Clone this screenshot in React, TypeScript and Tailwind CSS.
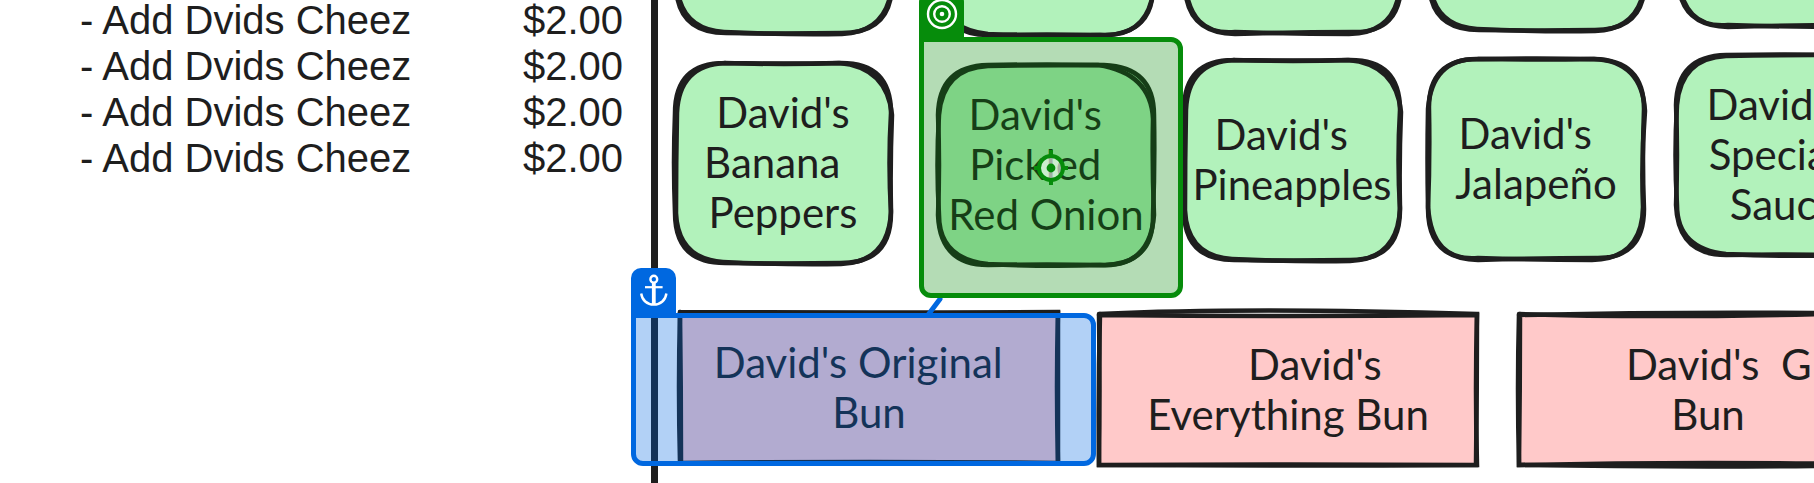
type Variant = "a" | "b" | "c";

const roundedStrokes: Record<Variant, string[]> = {
  a: [
    "M50 0 Q110 2 166 0 Q216 0 216 50 Q213 100 216 150 Q216 200 166 200 Q110 201 50 200 Q0 200 0 150 Q-2 100 0 50 Q0 0 50 0",
    "M50 0 Q110 1 164 0 Q212 4 217 52 Q215 100 216 148 Q214 199 166 201 Q110 202 48 199 Q3 196 1 150 Q1 100 2 50 Q4 2 50 0",
  ],
  b: [
    "M50 0 Q110 -1 166 0 Q216 2 216 50 Q217 100 215 150 Q216 199 166 200 Q110 199 50 200 Q2 200 0 150 Q2 100 0 50 Q1 1 50 0",
    "M50 1 Q110 0 160 0 Q213 8 215 54 Q214 100 216 150 Q212 203 162 200 Q110 202 50 199 Q1 194 1 150 Q-2 100 1 50 Q5 3 50 1",
  ],
  c: [
    "M50 0 Q110 1 166 0 Q216 1 216 50 Q214 100 216 150 Q216 200 168 199 Q110 199 50 201 Q0 200 0 150 Q2 100 1 50 Q0 0 50 0",
    "M50 0 Q110 -1 166 0 Q214 2 217 52 Q213 100 215 148 Q214 200 164 201 Q110 201 50 199 Q4 203 0 148 Q-1 100 0 50 Q4 -1 50 0",
  ],
};

const rectStrokes: Record<Variant, string[]> = {
  a: [
    "M0 0 Q190 1 378 0 Q376 75 378 151 Q190 149 0 151 Q-2 75 0 0",
    "M0 1 Q190 2 378 1 Q378 75 378 151 Q190 152 1 151 Q1 75 0 0",
  ],
  b: [
    "M0 0 Q150 -7 378 0 Q376 75 378 151 Q190 152 0 151 Q1 75 0 0",
    "M0 1 Q190 3 378 1 Q378 75 377 151 Q190 150 0 151 Q-1 75 1 0",
  ],
  c: [
    "M0 0 Q150 5 378 -2 Q376 75 378 151 Q190 147 0 151 Q-2 75 0 0",
    "M0 1 Q190 -3 378 0 Q378 75 377 151 Q190 154 0 151 Q1 75 1 0",
  ],
};

const ROUNDED_FILL =
  "M50 0 H166 Q216 0 216 50 V150 Q216 200 166 200 H50 Q0 200 0 150 V50 Q0 0 50 0";

function Sketch({ fill, outline, strokes, viewBox }: { fill: string; outline: string; strokes: string[]; viewBox: string }) {
  return (
    <svg viewBox={viewBox} className="absolute inset-0 size-full overflow-visible" aria-hidden="true">
      <path d={outline} fill={fill} />
      {strokes.map((d) => (
        <path key={d} d={d} fill="none" stroke="#1e1e1e" strokeWidth="4.5" strokeLinecap="round" />
      ))}
    </svg>
  );
}

function Label({ lines }: { lines: string[] }) {
  return (
    <p className="relative text-center font-['Excalifont','Virgil','Lato',sans-serif] text-[42px] leading-[50px] whitespace-pre">
      {lines.join("\n")}
    </p>
  );
}

function Topping({ place, lines, variant }: { place: string; lines: string[]; variant: Variant }) {
  return (
    <div className={`absolute flex h-[200px] w-[216px] items-center justify-center pb-0.5 ${place}`}>
      <Sketch fill="#b2f2bb" outline={ROUNDED_FILL} strokes={roundedStrokes[variant]} viewBox="0 0 216 200" />
      {lines.length > 0 && <Label lines={lines} />}
    </div>
  );
}

function Bun({ place, lines, variant }: { place: string; lines: string[]; variant: Variant }) {
  return (
    <div className={`absolute flex h-[151px] w-[378px] items-center justify-center pb-0.5 ${place}`}>
      <Sketch fill="#ffc9c9" outline="M0 0 H378 V151 H0 Z" strokes={rectStrokes[variant]} viewBox="0 0 378 151" />
      <Label lines={lines} />
    </div>
  );
}

const gap = "\u00a0\u00a0";

const toppings: { place: string; lines: string[]; variant: Variant }[] = [
  { place: "left-[676px] top-[-167px]", lines: [], variant: "a" },
  { place: "left-[938px] top-[-165px]", lines: [], variant: "b" },
  { place: "left-[1185px] top-[-167px]", lines: [], variant: "c" },
  { place: "left-[1429px] top-[-170px]", lines: [], variant: "a" },
  { place: "left-[1678px] top-[-174px]", lines: [], variant: "c" },
  { place: "left-[675px] top-[63px]", lines: ["David's", "Banana" + gap, "Peppers"], variant: "a" },
  { place: "left-[938px] top-[65px]", lines: ["David's" + gap, "Pickled" + gap, "Red Onion"], variant: "b" },
  { place: "left-[1184px] top-[60px]", lines: ["David's" + gap, "Pineapples"], variant: "a" },
  { place: "left-[1428px] top-[59px]", lines: ["David's" + gap, "Jalapeño"], variant: "c" },
  { place: "left-[1676px] top-[55px]", lines: ["David's" + gap, "Special" + gap, "Sauce"], variant: "b" },
];

const buns: { place: string; lines: string[]; variant: Variant }[] = [
  { place: "left-[680px] top-[312px]", lines: ["David's Original" + gap, "Bun"], variant: "a" },
  { place: "left-[1099px] top-[314px]", lines: [gap + gap + "\u00a0David's", "Everything Bun"], variant: "b" },
  { place: "left-[1519px] top-[314px]", lines: [gap + "David's" + gap + "G", "Bun"], variant: "c" },
];

const orderLines = [1, 2, 3, 4].map((id) => ({ id, name: "- Add Dvids Cheez", price: "$2.00" }));

function TargetIcon() {
  return (
    <svg viewBox="0 0 32 32" className="size-8" fill="none" stroke="#fff" strokeWidth="2.4" aria-hidden="true">
      <circle cx="16" cy="16" r="14" />
      <circle cx="16" cy="16" r="7.8" />
      <circle cx="16" cy="16" r="2.3" fill="#fff" stroke="none" />
    </svg>
  );
}

function AnchorIcon() {
  return (
    <svg viewBox="0 0 32 32" className="size-8" fill="none" stroke="#fff" aria-hidden="true">
      <circle cx="15.8" cy="5.2" r="3.4" strokeWidth="2.4" />
      <path d="M15.8 8.5V30" strokeWidth="3.8" />
      <path d="M7 13.2H24.6" strokeWidth="2.2" />
      <path d="M3.2 19.5C4 26 9 30.6 15.8 30.6S27.6 26 28.4 19.5" strokeWidth="2.4" />
    </svg>
  );
}

function Crosshair() {
  return (
    <svg viewBox="-18 -18 36 36" className="absolute top-[150px] left-[1033px] size-9" stroke="#068c0b" strokeWidth="4" aria-hidden="true">
      <path d="M0 -18V-12M0 12V17M-17 0H-12M12 0H17" />
      <circle r="12" fill="#fff" fillOpacity="0.6" />
      <circle r="4.4" fill="#068c0b" stroke="none" />
    </svg>
  );
}

export default function App() {
  return (
    <main className="relative h-screen overflow-hidden bg-white text-[#1e1e1e]">
      <table className="-mt-[3px] ml-20 w-[543px] font-['Liberation_Sans',Arial,sans-serif] text-[40px] leading-[46px]">
        <tbody>
          {orderLines.map((line) => (
            <tr key={line.id}>
              <td className="p-0">{line.name}</td>
              <td className="p-0 text-right">{line.price}</td>
            </tr>
          ))}
        </tbody>
      </table>

      <div className="absolute inset-y-0 left-[651px] w-[7px] bg-[#1e1e1e]" />

      {toppings.map((node) => (
        <Topping key={node.place} {...node} />
      ))}
      {buns.map((node) => (
        <Bun key={node.place} {...node} />
      ))}

      <svg viewBox="0 0 24 24" className="absolute top-[295px] left-[924px] size-6" aria-hidden="true">
        <path d="M4 20L16 4" stroke="#0068e0" strokeWidth="5" strokeLinecap="round" />
      </svg>

      <div className="absolute top-[313px] left-[631px] h-[153px] w-[465px] rounded-xl rounded-tl-none border-[5px] border-[#0068e0]">
        <div className="size-full bg-[#0068e0]/30" />
      </div>
      <div className="absolute top-[268px] left-[631px] flex h-[46px] w-[45px] items-start justify-center rounded-t-[10px] bg-[#0068e0] pt-[6px]">
        <AnchorIcon />
      </div>

      <div className="absolute top-[37px] left-[919px] h-[261px] w-[264px] rounded-xl rounded-tl-none border-[5px] border-[#068c0b]">
        <div className="size-full bg-[#068c0b]/30" />
      </div>
      <div className="absolute -top-2 left-[919px] flex h-[46px] w-[45px] items-start justify-center rounded-t-[10px] bg-[#068c0b] pt-[6px]">
        <TargetIcon />
      </div>
      <Crosshair />
    </main>
  );
}
